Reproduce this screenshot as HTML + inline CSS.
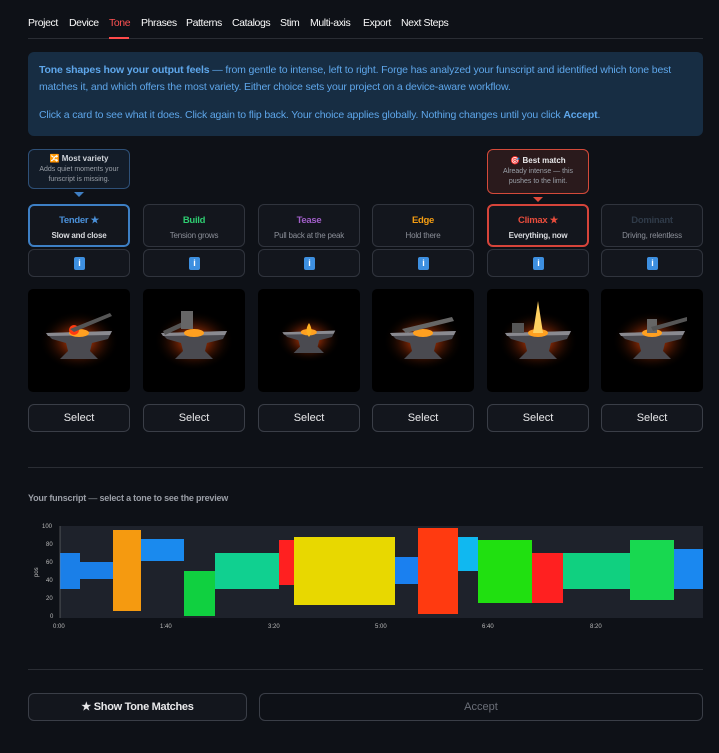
<!DOCTYPE html>
<html><head><meta charset="utf-8"><style>
*{margin:0;padding:0;box-sizing:border-box}
body{width:719px;height:753px;background:#0e1117;font-family:"Liberation Sans",sans-serif;color:#fafafa;position:relative;overflow:hidden}
.a{position:absolute}
.tabs span{position:absolute;top:17px;font-size:10.5px;letter-spacing:-.4px}
.card{position:absolute;top:204px;width:102px;height:43px;border:1px solid #30343d;border-radius:6px;background:#13161d;text-align:center}
.card b{display:block;font-size:9.5px;margin-top:10px;letter-spacing:-.3px}
.card i{display:block;font-style:normal;font-size:8px;color:#8b8f98;margin-top:5px;letter-spacing:-.2px}
.info{position:absolute;top:249px;width:102px;height:28px;border:1px solid #30343d;border-radius:6px;background:#13161d}
.info:after{content:"i";position:absolute;left:45px;top:7px;width:11px;height:13px;background:#3d8fe0;color:#fff;font-size:9px;font-weight:bold;text-align:center;line-height:13px;border-radius:2px}
.img{position:absolute;top:289px;width:102px;height:103px;background:#000;border-radius:5px;overflow:hidden}
.sel{position:absolute;top:404px;width:102px;height:28px;border:1px solid #3a3e47;border-radius:6px;background:#13161d;text-align:center;font-size:11px;line-height:27px;color:#e8e8ea}
.tip{position:absolute;width:102px;border-radius:6px;text-align:center;font-size:7px;color:#9aa0a8;line-height:10px}
</style></head><body>
<div class="tabs">
<span style="left:28px">Project</span><span style="left:69px">Device</span><span style="left:109px;color:#ff5252">Tone</span><span style="left:141px">Phrases</span><span style="left:186px">Patterns</span><span style="left:232px">Catalogs</span><span style="left:280px">Stim</span><span style="left:310px">Multi-axis</span><span style="left:363px">Export</span><span style="left:401px">Next Steps</span>
</div>
<div class="a" style="left:28px;top:38px;width:675px;height:1px;background:#2a2d34"></div>
<div class="a" style="left:109px;top:37px;width:20px;height:2px;background:#ff4b4b"></div>
<div class="a" style="left:28px;top:52px;width:675px;height:84px;background:#172d43;border-radius:6px;color:#5ea6ea;font-size:10.5px;line-height:17px;padding:10px 11px;letter-spacing:-.15px">
<b>Tone shapes how your output feels</b> — from gentle to intense, left to right. Forge has analyzed your funscript and identified which tone best matches it, and which offers the most variety. Either choice sets your project on a device-aware workflow.<div style="height:11px"></div>Click a card to see what it does. Click again to flip back. Your choice applies globally. Nothing changes until you click <b>Accept</b>.</div>

<div class="tip" style="left:28px;top:149px;height:40px;border:1px solid #2e5077;background:#131c28;padding-top:4px"><b style="color:#d0d4da;font-size:8px">🔀 Most variety</b><br>Adds quiet moments your<br>funscript is missing.</div>
<div class="a" style="left:74px;top:192px;border-left:5px solid transparent;border-right:5px solid transparent;border-top:5px solid #3f7fc4"></div>
<div class="tip" style="left:487px;top:149px;height:45px;border:1px solid #d44a3a;background:#2a1a1c;padding-top:6px"><b style="color:#e8e8ea;font-size:8px">🎯 Best match</b><br>Already intense — this<br>pushes to the limit.</div>
<div class="a" style="left:533px;top:197px;border-left:5px solid transparent;border-right:5px solid transparent;border-top:5px solid #e04a3a"></div>

<div class="card" style="left:28px;border:2px solid #3d7fc4"><b style="color:#4a90d9;margin-top:9px">Tender ★</b><i style="color:#d8dade;font-weight:bold">Slow and close</i></div>
<div class="card" style="left:143px"><b style="color:#2ecc71">Build</b><i>Tension grows</i></div>
<div class="card" style="left:258px"><b style="color:#a05ec8">Tease</b><i>Pull back at the peak</i></div>
<div class="card" style="left:372px"><b style="color:#f39c12">Edge</b><i>Hold there</i></div>
<div class="card" style="left:487px;border:2px solid #d6443a"><b style="color:#e74c3c;margin-top:9px">Climax ★</b><i style="color:#d8dade;font-weight:bold">Everything, now</i></div>
<div class="card" style="left:601px"><b style="color:#2f3a48">Dominant</b><i>Driving, relentless</i></div>

<div class="info" style="left:28px"></div><div class="info" style="left:143px"></div><div class="info" style="left:258px"></div><div class="info" style="left:372px"></div><div class="info" style="left:487px"></div><div class="info" style="left:601px"></div>

<svg width="0" height="0" style="position:absolute"><defs>
<radialGradient id="g"><stop offset="0" stop-color="#ffb030" stop-opacity=".9"/><stop offset=".35" stop-color="#d0400a" stop-opacity=".55"/><stop offset="1" stop-color="#000" stop-opacity="0"/></radialGradient>
<g id="anv"><ellipse cx="51" cy="52" rx="40" ry="30" fill="url(#g)"/><path d="M18 44 L84 42 L80 50 L64 54 L62 62 L70 70 L32 70 L40 62 L38 54 L24 50 Z" fill="#4a4a50"/><path d="M18 44 L84 42 L82 46 L20 47 Z" fill="#8a8a90"/><ellipse cx="51" cy="44" rx="10" ry="4" fill="#ffa020"/></g></defs></svg>
<div class="img" style="left:28px"><svg width="102" height="103"><use href="#anv"/><circle cx="46" cy="41" r="5" fill="#ff3a10"/><path d="M42 40 L82 24 L84 27 L46 43Z" fill="#555"/></svg></div>
<div class="img" style="left:143px"><svg width="102" height="103"><use href="#anv"/><path d="M20 42 L46 30 L48 34 L22 46Z" fill="#555"/><rect x="38" y="22" width="12" height="18" fill="#666"/></svg></div>
<div class="img" style="left:258px"><svg width="102" height="103"><use href="#anv" transform="translate(10 8) scale(.8)"/><path d="M51 34 Q46 42 51 48 Q56 42 51 34Z" fill="#ffb020"/></svg></div>
<div class="img" style="left:372px"><svg width="102" height="103"><use href="#anv"/><path d="M30 40 L80 28 L82 32 L34 44Z" fill="#666"/></svg></div>
<div class="img" style="left:487px"><svg width="102" height="103"><use href="#anv"/><path d="M51 12 L56 44 L46 44Z" fill="#ffd060"/><rect x="25" y="34" width="12" height="10" fill="#555"/></svg></div>
<div class="img" style="left:601px"><svg width="102" height="103"><use href="#anv"/><rect x="46" y="30" width="10" height="14" fill="#666"/><path d="M50 38 L86 28 L86 32 L52 42Z" fill="#555"/></svg></div>

<div class="sel" style="left:28px">Select</div><div class="sel" style="left:143px">Select</div><div class="sel" style="left:258px">Select</div><div class="sel" style="left:372px">Select</div><div class="sel" style="left:487px">Select</div><div class="sel" style="left:601px">Select</div>

<div class="a" style="left:28px;top:467px;width:675px;height:1px;background:#2a2d34"></div>
<div class="a" style="left:28px;top:493px;font-size:9px;color:#9a9ea6;font-weight:bold;letter-spacing:-.2px">Your funscript <span style="font-weight:normal">—</span> select a tone to see the preview</div>

<svg class="a" style="left:0;top:515px" width="719" height="120" font-family="Liberation Sans" font-size="6" fill="#bbb">
<rect x="60" y="11" width="643" height="92" fill="#1e222b"/>
<g transform="translate(0,101)">
<rect x="60" y="-63" width="20" height="36" fill="#1a7fe8"/><rect x="80" y="-54" width="33" height="17" fill="#1a7fe8"/>
<rect x="113" y="-86" width="28" height="81" fill="#f59a10"/>
<rect x="141" y="-77" width="43" height="22" fill="#1a8aee"/>
<rect x="184" y="-45" width="31" height="45" fill="#10d040"/>
<rect x="215" y="-63" width="64" height="36" fill="#10d090"/>
<rect x="279" y="-76" width="15" height="45" fill="#ff2020"/>
<rect x="294" y="-79" width="101" height="68" fill="#e8d800"/>
<rect x="395" y="-59" width="23" height="27" fill="#1a80f0"/>
<rect x="418" y="-88" width="40" height="86" fill="#ff3a10"/>
<rect x="458" y="-79" width="20" height="34" fill="#10b8f0"/>
<rect x="478" y="-76" width="54" height="63" fill="#20e010"/>
<rect x="532" y="-63" width="31" height="50" fill="#ff2020"/>
<rect x="563" y="-63" width="67" height="36" fill="#10d080"/>
<rect x="630" y="-76" width="44" height="60" fill="#18d850"/>
<rect x="674" y="-67" width="29" height="40" fill="#1a88f0"/>
</g>
<line x1="60" y1="11" x2="60" y2="103" stroke="#888" stroke-width=".5"/>
<text x="42" y="13">100</text><text x="46" y="31">80</text><text x="46" y="49">60</text><text x="46" y="67">40</text><text x="46" y="85">20</text><text x="50" y="103">0</text>
<text x="38" y="62" transform="rotate(-90 38 62)">pos</text>
<text x="53" y="113">0:00</text><text x="160" y="113">1:40</text><text x="268" y="113">3:20</text><text x="375" y="113">5:00</text><text x="482" y="113">6:40</text><text x="590" y="113">8:20</text>
</svg>

<div class="a" style="left:28px;top:669px;width:675px;height:1px;background:#2a2d34"></div>
<div class="a" style="left:28px;top:693px;width:219px;height:28px;border:1px solid #3a3e47;border-radius:6px;background:#13161d;text-align:center;font-size:11px;line-height:27px;font-weight:bold;letter-spacing:-.3px;color:#e8e8ea">★ Show Tone Matches</div>
<div class="a" style="left:259px;top:693px;width:444px;height:28px;border:1px solid #3a3e47;border-radius:6px;text-align:center;font-size:11px;line-height:27px;color:#6b6f78">Accept</div>
</body></html>
